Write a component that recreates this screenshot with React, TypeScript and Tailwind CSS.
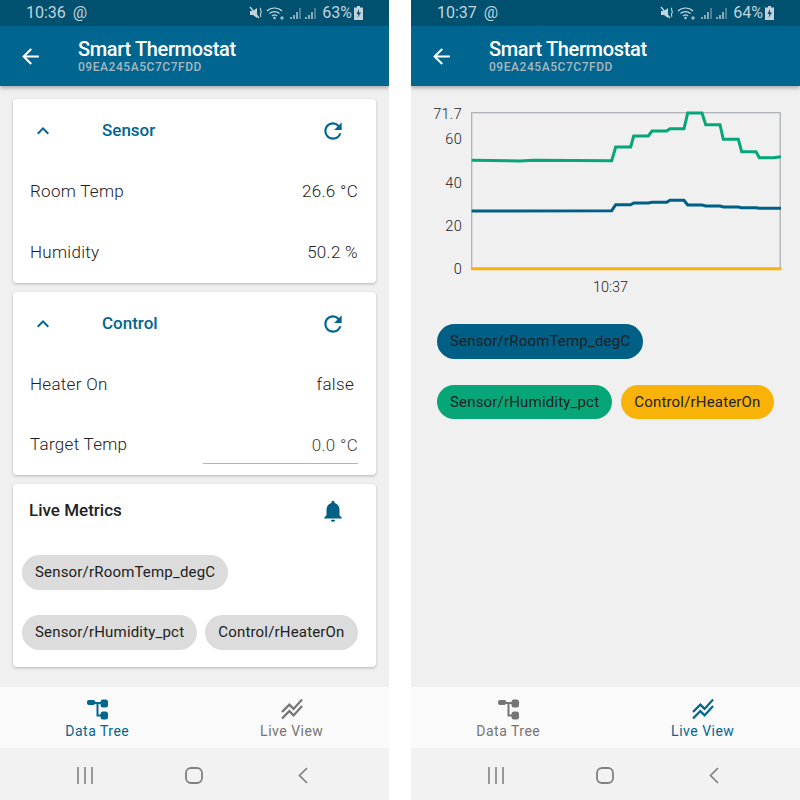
import React from "react";
import { MdArrowBack, MdExpandLess, MdRefresh, MdNotifications, MdStackedLineChart } from "react-icons/md";

const font = { fontFamily: "Roboto, sans-serif" };

function StatusIcons() {
  return (
    <svg width="69" height="16" viewBox="0 0 69 16" className="block text-[#c3d3dc] mr-[4px]" fill="none" stroke="currentColor">
      {/* muted speaker */}
      <path d="M1 6h3l4-3v10l-4-3H1z" fill="currentColor" stroke="none" />
      <path d="M1 2l9 11" strokeWidth="1.4" />
      <path d="M11 3c1.5 1 0 2 1 3s0 2-.5 3 1 2 0 3" strokeWidth="1.1" />
      {/* wifi */}
      <path d="M18 6c4-4 11-4 15 0M20.500 8.500c2.500-2.500 7.500-2.500 10 0M23 11c1.500-1.300 3.500-1.300 5 0" strokeWidth="1.2" />
      <circle cx="25.500" cy="13" r="1.200" fill="currentColor" stroke="none" />
      <path d="M31 13h4M33 11v4" strokeWidth="1" />
      {/* signal 1 */}
      <path d="M42 14v-2M45 14v-4M48 14v-7" strokeWidth="1.400" />
      <path d="M51 14V3" strokeWidth="1.400" opacity=".55" />
      {/* signal 2 */}
      <path d="M57 14v-2M60 14v-4M63 14v-7" strokeWidth="1.400" />
      <path d="M66 14V3" strokeWidth="1.400" opacity=".55" />
    </svg>
  );
}

function Battery() {
  return (
    <svg width="9" height="14" viewBox="0 0 9 14" className="block text-[#c3d3dc]">
      <path d="M3 0h3v1.500h3V14H0V1.500h3z" fill="currentColor" />
      <path d="M5 3L2.500 8h2L3.500 12 7 6.500H5z" fill="#00506f" />
    </svg>
  );
}

function Header({ time, pct }: { time: string; pct: string }) {
  return (
    <div className="shadow-[0_2px_4px_rgba(0,0,0,0.3)] relative z-10">
      <div className="h-[26px] bg-[#00506f] flex items-center text-[#c3d3dc] text-[16px] pl-[26px] pr-[26px]">
        <span>{time}</span>
        <span className="ml-[7px]">@</span>
        <div className="ml-auto flex items-center">
          <StatusIcons />
          <span className="mr-[2px]">{pct}</span>
          <Battery />
        </div>
      </div>
      <div className="h-[60px] bg-[#006690] flex items-center text-white">
        <MdArrowBack className="ml-[18px] text-[25px]" />
        <div className="ml-[35px]">
          <div className="text-[20px] leading-[24px] font-medium mt-[-1px] tracking-[-0.35px]">Smart Thermostat</div>
          <div className="text-[12px] leading-[13px] font-medium text-[#a9b7c0] tracking-[0.55px]">09EA245A5C7C7FDD</div>
        </div>
      </div>
    </div>
  );
}

function TreeIcon() {
  return (
    <svg width="24" height="24" viewBox="0 0 24 24" fill="currentColor" className="block">
      <path d="M4 3h4.500c.8 0 1.200.5 1.500 1.200l.8 1.300-.8 1.300c-.3.700-.7 1.200-1.500 1.200H4c-1.200 0-2-.8-2-2V5c0-1.200.8-2 2-2z" />
      <rect x="15.500" y="2.500" width="7.500" height="8" rx="2.500" />
      <rect x="15.500" y="14.500" width="7.500" height="8" rx="2.500" />
      <path d="M9 6h7M12.500 6v12.500H16" fill="none" stroke="currentColor" strokeWidth="2" />
    </svg>
  );
}

function BottomNav({ active }: { active: 0 | 1 }) {
  const on = "text-[#006690]";
  const off = "text-[#757575]";
  return (
    <div>
      <div className="h-[61px] bg-[#fafafa] flex">
        <div className={`w-1/2 flex flex-col items-center pt-[10px] ${active === 0 ? on : off}`}>
          <TreeIcon />
          <span className="text-[14px] leading-[18px] mt-[1px] tracking-[0.5px]">Data Tree</span>
        </div>
        <div className={`w-1/2 flex flex-col items-center pt-[9px] ${active === 1 ? on : off}`}>
          <MdStackedLineChart className="text-[26px]" />
          <span className="text-[14px] leading-[18px] tracking-[0.5px]">Live View</span>
        </div>
      </div>
      <div className="h-[52px] bg-[#f2f2f2] flex items-center justify-center gap-[91px] text-[#808080] pt-[2px] pr-[2px]">
        <svg width="18" height="17" viewBox="0 0 18 17" fill="none" stroke="currentColor" strokeWidth="1.600" className="block">
          <path d="M2 0v17M9 0v17M16 0v17" />
        </svg>
        <svg width="18" height="17" viewBox="0 0 18 17" fill="none" stroke="currentColor" strokeWidth="1.800" className="block">
          <rect x="1" y="1" width="16" height="15" rx="5" />
        </svg>
        <svg width="18" height="17" viewBox="0 0 18 17" fill="none" stroke="currentColor" strokeWidth="1.700" className="block">
          <path d="M13 1L5.500 8.500 13 16" />
        </svg>
      </div>
    </div>
  );
}

function Row({ label, value }: { label: string; value: string }) {
  return (
    <div className="h-[61px] flex items-center justify-between pl-[17px] pr-[18px] text-[17px] font-light tracking-[0.3px] text-[#212121]">
      <span>{label}</span>
      <span>{value}</span>
    </div>
  );
}

function CardHeader({ title }: { title: string }) {
  return (
    <div className="h-[62.500px] flex items-center text-[#006690] pt-[1px]">
      <MdExpandLess className="ml-[18px] text-[24px]" />
      <span className="ml-[47px] text-[17px] font-medium">{title}</span>
      <MdRefresh className="ml-auto mr-[30px] text-[26px]" />
    </div>
  );
}

const cardCls = "bg-white rounded-[4px] shadow-[0_1px_3px_rgba(0,0,0,0.25)]";

function Chip({ children, cls }: { children: React.ReactNode; cls: string }) {
  return (
    <div className={`h-[34.500px] rounded-full px-[13px] flex items-center text-[15px] tracking-[0.18px] text-[#212121] ${cls}`}>
      {children}
    </div>
  );
}

function DataTree() {
  return (
    <div className="flex-1 bg-[#f0f0f0] px-[13px] pt-[13px] flex flex-col gap-[9px]">
      <div className={`${cardCls} h-[184px]`}>
        <CardHeader title="Sensor" />
        <Row label="Room Temp" value="26.6 °C" />
        <Row label="Humidity" value="50.2 %" />
      </div>
      <div className={`${cardCls} h-[183px]`}>
        <CardHeader title="Control" />
        <div className="h-[60px] flex items-center justify-between pl-[17px] pr-[22px] text-[17px] font-light tracking-[0.3px] text-[#212121]">
          <span>Heater On</span>
          <span>false</span>
        </div>
        <div className="h-[60px] flex items-center pl-[17px] pr-[18px] text-[17px] font-light tracking-[0.3px] text-[#212121]">
          <span>Target Temp</span>
          <div className="ml-auto w-[155px] h-[38px] border-b border-[#b5b5b5] text-right text-[#424242] pt-[7px]">
            0.0 °C
          </div>
        </div>
      </div>
      <div className={`${cardCls} h-[183px]`}>
        <div className="h-[53px] flex items-center pl-[16px] text-[#212121]">
          <span className="text-[17px] font-medium">Live Metrics</span>
          <MdNotifications className="ml-auto mr-[30px] text-[26px] text-[#005f85]" />
        </div>
        <div className="pl-[9px] pt-[18px] flex flex-col gap-[25.500px]">
          <div className="flex gap-[8px]">
            <Chip cls="bg-[#dcdcdc]">Sensor/rRoomTemp_degC</Chip>
          </div>
          <div className="flex gap-[8px]">
            <Chip cls="bg-[#dcdcdc]">Sensor/rHumidity_pct</Chip>
            <Chip cls="bg-[#dcdcdc]">Control/rHeaterOn</Chip>
          </div>
        </div>
      </div>
    </div>
  );
}

const toPts = (p: number[][]) => p.map(([x, y]) => `${(x / 3).toFixed(1)},${(y / 3).toFixed(1)}`).join(" ");
const green = [[155,196],[300,198],[340,196],[575,197],[587,156],[632,156],[641,123],[685,123],[696,108],[740,108],[750,101],[792,101],[803,54],[846,54],[857,89],[900,89],[910,133],[955,133],[965,170],[1008,170],[1018,188],[1060,188],[1083,185]];
const blue = [[155,348],[575,347],[587,329],[632,329],[641,324],[685,324],[696,322],[740,322],[750,316],[792,316],[803,330],[846,330],[857,333],[900,333],[910,336],[955,336],[965,338],[1008,338],[1018,340],[1083,340]];

function Chart() {
  const labels: [string, number][] = [["71.7", 24], ["60", 49], ["40", 93], ["20", 136], ["0", 179]];
  return (
    <svg width="380" height="205" viewBox="0 0 380 205" className="block ml-[9px] mt-[9px]" style={font}>
      <rect x="51.700" y="17.700" width="308.500" height="156" fill="none" stroke="#aeb1b5" strokeWidth="1.300" />
      {labels.map(([t, y]) => (
        <text key={t} x="42" y={y} textAnchor="end" fontSize="14.500" fontWeight="300" fill="#212121" letterSpacing="0.3">{t}</text>
      ))}
      <text x="190.500" y="197" textAnchor="middle" fontSize="14.500" fontWeight="300" fill="#212121">10:37</text>
      <polyline points={toPts(blue)} fill="none" stroke="#005f85" strokeWidth="3" />
      <polyline points={toPts(green)} fill="none" stroke="#06a678" strokeWidth="3" />
      <line x1="51" x2="361.500" y1="173.700" y2="173.700" stroke="#f9b208" strokeWidth="3" />
    </svg>
  );
}

function LiveView() {
  return (
    <div className="flex-1 bg-[#f0f0f0] flex flex-col">
      <Chart />
      <div className="pl-[26px] pt-[24px] flex flex-col gap-[26px]">
        <div className="flex gap-[9px]">
          <Chip cls="bg-[#005f85]">Sensor/rRoomTemp_degC</Chip>
        </div>
        <div className="flex gap-[9px]">
          <Chip cls="bg-[#06a678]">Sensor/rHumidity_pct</Chip>
          <Chip cls="bg-[#f9b208]">Control/rHeaterOn</Chip>
        </div>
      </div>
    </div>
  );
}

function Phone({ time, pct, active, children }: { time: string; pct: string; active: 0 | 1; children: React.ReactNode }) {
  return (
    <div className="w-[389px] h-[800px] flex flex-col overflow-hidden">
      <Header time={time} pct={pct} />
      {children}
      <BottomNav active={active} />
    </div>
  );
}

export default function App() {
  return (
    <div className="w-[800px] h-[800px] bg-white flex justify-between overflow-hidden" style={font}>
      <Phone time="10:36" pct="63%" active={0}><DataTree /></Phone>
      <Phone time="10:37" pct="64%" active={1}><LiveView /></Phone>
    </div>
  );
}
